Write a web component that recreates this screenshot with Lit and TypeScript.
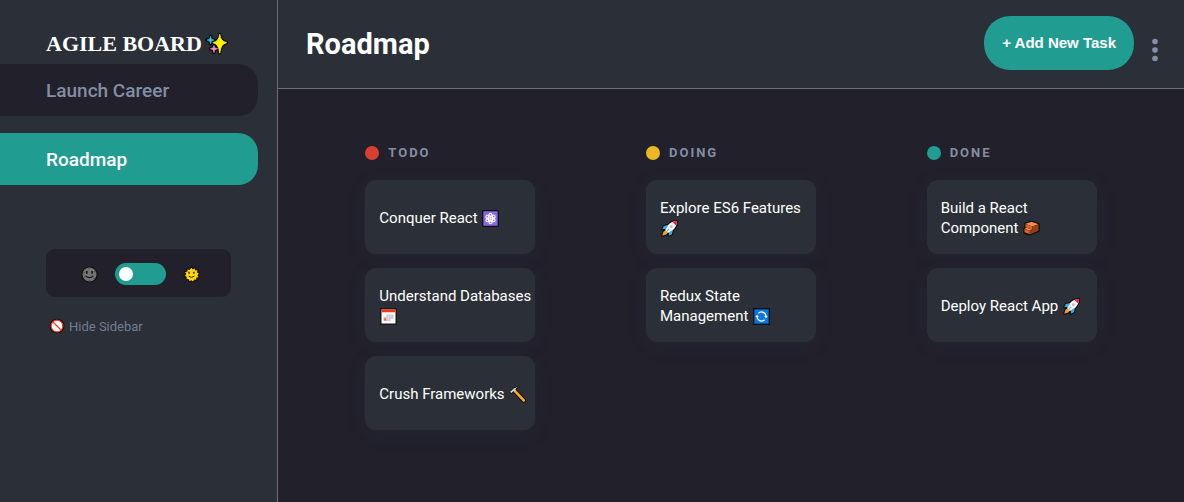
import { LitElement, html, css, svg, type TemplateResult } from "lit";
import { customElement, property, state } from "lit/decorators.js";
import { classMap } from "lit/directives/class-map.js";

type IconName =
  | "sparkles" | "moon" | "sun" | "forbidden" | "atom"
  | "calendar" | "hammer" | "rocket" | "refresh" | "brick";

const sparkle = "M15 1.5 Q15.8 9.2 22.5 10.5 Q15.8 11.8 15 22 Q14.2 11.8 7.5 10.5 Q14.2 9.2 15 1.5Z";

const icons: Record<IconName, TemplateResult> = {
  sparkles: svg`
    <g stroke="#07070a" stroke-width="3.4" stroke-linejoin="round" fill="#07070a">
      <path d=${sparkle}/>
      <path d="M5 3.5 L6 6.7 L9 7.7 L6 8.7 L5 12 L4 8.7 L1 7.7 L4 6.7Z"/>
      <path d="M8.7 13.5 L9.7 16.2 L12.7 17.2 L9.7 18.2 L8.7 21.5 L7.7 18.2 L4.7 17.2 L7.7 16.2Z"/>
    </g>
    <path d=${sparkle} fill="#fff200" stroke="#fff200" stroke-width="1"/>
    <path d="M5 3.5 L6 6.7 L9 7.7 L6 8.7 L5 12 L4 8.7 L1 7.7 L4 6.7Z" fill="#35c5e8" stroke="#35c5e8" stroke-width=".6"/>
    <path d="M8.7 13.5 L9.7 16.2 L12.7 17.2 L9.7 18.2 L8.7 21.5 L7.7 18.2 L4.7 17.2 L7.7 16.2Z" fill="#f78fc0" stroke="#f78fc0" stroke-width=".6"/>`,
  moon: svg`
    <circle cx="12" cy="12" r="10.8" fill="#747475" stroke="#111" stroke-width="1.8"/>
    <path d="M3 9.5h2.5M18.5 8h2M10 2.8h3M4 15.5h2M17.5 17.5h1.5M11 20.8h3" stroke="#4b4b4d" stroke-width="1.6"/>
    <path d="M8.3 7v4M15.7 7v4" stroke="#151515" stroke-width="2.2"/>
    <path d="M6.5 14Q12 19 17.5 14" fill="none" stroke="#151515" stroke-width="1.6"/>`,
  sun: svg`
    <path d="M12 .8l2 3 3-1.8.8 3.4 3.6-.4-.8 3.6 3 1.6-2.2 2.8 1.5 3.2-3.5 1 .2 3.5-3.5-.6-1.6 3.1-2.8-2.2-3 1.6-1.2-3.4-3.6.2.7-3.5-3.2-1.7 2.3-2.9L1.9 8l3.6-.8.2-3.5 3.3.9z" fill="#ffd800" stroke="#111" stroke-width="1.6"/>
    <path d="M8.6 8v3M15.4 8v3" stroke="#241c00" stroke-width="2"/>
    <path d="M8 14.3Q12 18 16 14.3" fill="none" stroke="#241c00" stroke-width="1.4"/>`,
  forbidden: svg`
    <circle cx="12" cy="12" r="11" fill="#0c0c0c"/>
    <circle cx="12" cy="12" r="8.8" fill="#fff" stroke="#ee3d23" stroke-width="1.8"/>
    <path d="M6 6l12 12" stroke="#ee3d23" stroke-width="1.8"/>`,
  atom: svg`
    <rect x="1" y="1" width="22" height="22" rx="1" fill="#8767e8" stroke="#0e0e12" stroke-width="1.8"/>
    <g fill="none" stroke="#fff" stroke-width="1.5">
      <ellipse cx="12" cy="12" rx="2.9" ry="7.2"/>
      <ellipse cx="12" cy="12" rx="2.9" ry="7.2" transform="rotate(60 12 12)"/>
      <ellipse cx="12" cy="12" rx="2.9" ry="7.2" transform="rotate(120 12 12)"/>
    </g>
    <circle cx="12" cy="12" r="1.7" fill="#fff"/>`,
  calendar: svg`
    <rect x="1.2" y="1.2" width="21.6" height="21.6" fill="#fff" stroke="#0c0c0c" stroke-width="1.8"/>
    <path d="M2.1 2.1h19.8v4H2.1z" fill="#f03a17"/>
    <path d="M9 9h10v6.5h-4v3H5v-6h4z" fill="#c9c9c9"/>
    <path d="M9 12.3h10M5 15.4h14M8.6 10v8M12 9v9M15.4 9v7" stroke="#e6e6e6" stroke-width=".6"/>
    <path d="M5.5 14.5h3.2v3.2H5.5z" fill="#ee6a50"/>`,
  hammer: svg`
    <path d="M9 8L20.8 20.3" stroke="#0b0b0b" stroke-width="6.4" stroke-linecap="round"/>
    <path d="M3 11L.8 8 7 2.5l5-1.7.6 1.4-2.8 2.2L11 7 7.8 9.6 5.8 8z" fill="#cfcfcf" stroke="#0b0b0b" stroke-width="1.4" stroke-linejoin="round"/>
    <path d="M9.2 8L20.8 20.4" stroke="#ffac13" stroke-width="3.8" stroke-linecap="round"/>`,
  rocket: svg`
    <g stroke="#0b0b0b" stroke-width="3" stroke-linejoin="round">
      <path d="M22.5 1.5Q15 1.5 10 7L4 8.5 1.8 13l4.2-.4L3.5 16.5 1.8 22.2l5.7-1.7 3.8-2.5-.4 4.2 4.5-2.2 1.4-6Q22.5 9 22.5 1.5Z"/>
    </g>
    <path d="M10 7L4 8.5 1.8 13l5-.5zM17 14l-1.6 6-4.5 2.2.5-5z" fill="#2eb2f1"/>
    <path d="M7 14L3.4 16.5 1.8 22.2l5.7-1.7L10 17z" fill="#ff9b20"/>
    <path d="M22.5 1.5Q15 1.5 10 7L5.8 14.2 9.8 18.2 17 14Q22.5 9 22.5 1.5Z" fill="#f4f5f6"/>
    <path d="M22.5 1.5Q19.5 1.5 16.2 2.8L21.2 7.8Q22.5 4.5 22.5 1.5Z" fill="#f01d32"/>
    <circle cx="14.6" cy="9.4" r="2" fill="#b8bdc2"/>
    <path d="M8 16l3.5-3.5" stroke="#41b9ea" stroke-width="1.5"/>`,
  refresh: svg`
    <rect x="1" y="1" width="22" height="22" fill="#0b77dc" stroke="#0b0b10" stroke-width="1.8"/>
    <g fill="none" stroke="#fff" stroke-width="1.8">
      <path d="M7.6 7.4A6.3 6.3 0 0 1 18.3 12M16.4 16.6A6.3 6.3 0 0 1 5.7 12"/>
    </g>
    <path d="M15.8 11.4h5l-2.5 3zM3.2 12.6h5l-2.5-3z" fill="#fff"/>`,
  brick: svg`
    <path d="M3 5L12 1.8 22.5 5.5v10L9 21 1.5 18v-6l3-1.5L2.8 9.5z" fill="#0b0b0b" stroke="#0b0b0b" stroke-width="2" stroke-linejoin="round"/>
    <path d="M3.4 5.2L12 2.4 22 6 13 9z" fill="#f98a52"/>
    <path d="M3.4 5.6L13 9.2v4.6L3.4 10.2z" fill="#e0601f"/>
    <path d="M13 9.2L22 6.2v9L9.6 20.4v-5l3.4-1.4z" fill="#93401c"/>
    <path d="M2 12.4l3-1.3 7.6 2.8-3.2 1.4z" fill="#f98a52"/>
    <path d="M2 12.8l7.4 2.7v4.7L2 17.4z" fill="#e0601f"/>`,
};

@customElement("emoji-icon")
export class EmojiIcon extends LitElement {
  @property() name: IconName = "rocket";

  static styles = css`
    :host { display: inline-block; width: 17px; height: 17px; vertical-align: -4px; }
    .glyph { display: block; width: 100%; height: 100%; overflow: visible; }
  `;

  render() {
    return html`<svg class="glyph" viewBox="0 0 24 24" aria-hidden="true">${icons[this.name]}</svg>`;
  }
}

interface Task { title: string; icon: IconName; }
interface Column { name: string; tone: string; tasks: Task[]; }

const columns: Column[] = [
  { name: "TODO", tone: "red", tasks: [
    { title: "Conquer React", icon: "atom" },
    { title: "Understand Databases", icon: "calendar" },
    { title: "Crush Frameworks", icon: "hammer" },
  ] },
  { name: "DOING", tone: "yellow", tasks: [
    { title: "Explore ES6 Features", icon: "rocket" },
    { title: "Redux State Management", icon: "refresh" },
  ] },
  { name: "DONE", tone: "teal", tasks: [
    { title: "Build a React Component", icon: "brick" },
    { title: "Deploy React App", icon: "rocket" },
  ] },
];

@customElement("app-root")
export class AppRoot extends LitElement {
  @state() private board = "Roadmap";

  static styles = css`
    :host {
      --panel: #2b2f38;
      --ground: #22202b;
      --teal: #219c90;
      --muted: #828fa3;
      --line: #6b6d72;
      display: grid;
      grid-template-columns: 278px 1fr;
      min-height: 100vh;
      background: var(--ground);
      color: #fff;
      font-family: Roboto, "Liberation Sans", sans-serif;
    }
    * { box-sizing: border-box; }
    button { border: 0; padding: 0; background: none; color: inherit; font: inherit; cursor: pointer; }
    .sidebar { background: var(--panel); border-right: 1px solid var(--line); padding-top: 24px; }
    .brand {
      display: flex; align-items: center; gap: 4px;
      margin: 0; padding-left: 46px; height: 40px;
      font: bold 22px/40px "Liberation Serif", serif;
    }
    .brand-icon { width: 22px; height: 22px; }
    .boards { display: flex; flex-direction: column; gap: 17px; padding-right: 19px; }
    .board {
      height: 52px; padding-left: 46px; text-align: left;
      background: var(--ground); color: var(--muted);
      border-radius: 0 20px 20px 0;
      font-size: 19px; font-weight: 500;
    }
    .board.active { background: var(--teal); color: #fff; }
    .theme {
      display: flex; align-items: center; justify-content: center; gap: 17px;
      height: 48px; margin: 64px 46px 0; padding: 2px 0 0 3px;
      border-radius: 9px; background: var(--ground);
    }
    .switch {
      appearance: none; display: flex; align-items: center;
      width: 51px; height: 22px; margin: 0; padding: 0 4px;
      border-radius: 11px; background: var(--teal); cursor: pointer;
    }
    .switch::before { content: ""; width: 14px; height: 14px; border-radius: 50%; background: #fff; }
    .switch:checked { justify-content: flex-end; }
    .hide {
      display: flex; align-items: center; gap: 4px;
      margin: 20px 0 0 49px; height: 18px; color: #717d92; font-size: 13px;
    }
    .hide-icon { width: 16px; height: 16px; }
    .header {
      display: flex; align-items: center; height: 89px;
      padding: 0 20px 2px 28px; background: var(--panel); border-bottom: 1px solid var(--line);
    }
    .title { flex: 1; margin: 0; padding-top: 2px; font-size: 29px; font-weight: 700; line-height: 40px; }
    .add {
      height: 54px; padding: 0 18px; border-radius: 26px; background: var(--teal);
      font: bold 15px/20px "Liberation Sans", sans-serif;
    }
    .menu { width: 18px; height: 24px; margin: 14px 0 0 12px; }
    .menu-dots { display: block; width: 18px; height: 24px; fill: #8490aa; }
    .columns { display: flex; justify-content: space-around; padding: 54px 32px 32px; }
    .column { width: 170px; }
    .name {
      display: flex; align-items: center; gap: 9px; margin: 0 0 17px;
      color: var(--muted); font-size: 13px; font-weight: 700; line-height: 20px; letter-spacing: 2px;
    }
    .dot { width: 14px; height: 14px; border-radius: 50%; }
    .dot.red { background: #d83f31; }
    .dot.yellow { background: #e9b824; }
    .dot.teal { background: var(--teal); }
    .cards { display: flex; flex-direction: column; gap: 14px; margin: 0; padding: 0; list-style: none; }
    .card {
      display: flex; align-items: center; width: 100%; min-height: 74px; padding: 2px 3px 0 14px;
      border-radius: 11px; background: #2b3038; text-align: left;
      font-size: 15px; line-height: 20px;
      box-shadow: 0 4px 20px rgba(54, 78, 126, 0.1);
    }
    .task-icon { margin-left: 1px; }
  `;

  private renderColumn(c: Column) {
    return html`
      <section class="column">
        <h2 class="name"><span class="dot ${c.tone}"></span>${c.name}</h2>
        <ul class="cards">
          ${c.tasks.map((t) => html`<li><button class="card"><span>${t.title} <emoji-icon class="task-icon" name=${t.icon}></emoji-icon></span></button></li>`)}
        </ul>
      </section>`;
  }

  render() {
    return html`
      <aside class="sidebar">
        <h1 class="brand">AGILE BOARD<emoji-icon class="brand-icon" name="sparkles"></emoji-icon></h1>
        <nav class="boards">
          ${["Launch Career", "Roadmap"].map((b) => html`
            <button class=${classMap({ board: true, active: b === this.board })} @click=${() => (this.board = b)}>${b}</button>`)}
        </nav>
        <div class="theme">
          <emoji-icon name="moon"></emoji-icon>
          <input class="switch" type="checkbox" role="switch" aria-label="Light theme">
          <emoji-icon name="sun"></emoji-icon>
        </div>
        <button class="hide"><emoji-icon class="hide-icon" name="forbidden"></emoji-icon>Hide Sidebar</button>
      </aside>
      <main>
        <header class="header">
          <h1 class="title">${this.board}</h1>
          <button class="add">+ Add New Task</button>
          <button class="menu" aria-label="Board menu">
            <svg class="menu-dots" viewBox="0 0 18 24"><circle cx="9" cy="3.5" r="2.8"/><circle cx="9" cy="12" r="2.8"/><circle cx="9" cy="20.5" r="2.8"/></svg>
          </button>
        </header>
        <div class="columns">${columns.map((c) => this.renderColumn(c))}</div>
      </main>`;
  }
}
